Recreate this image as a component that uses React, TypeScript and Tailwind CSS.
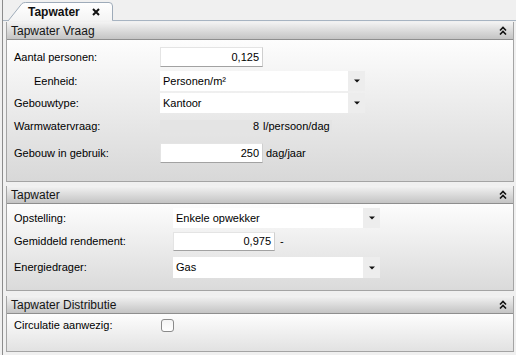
import type { ReactNode } from 'react';

function Chevrons() {
  return (
    <svg width="8" height="9" viewBox="0 0 8 9" className="mr-[6px]">
      <path d="M1 4.5 L4 1.5 L7 4.5" fill="none" stroke="#111" strokeWidth="1.6" />
      <path d="M1 8.5 L4 5.5 L7 8.5" fill="none" stroke="#111" strokeWidth="1.6" />
    </svg>
  );
}

function Caret() {
  return (
    <svg width="6" height="4" viewBox="0 0 6 4">
      <path d="M0 0.5 H6 L3 3.5 Z" fill="#111" />
    </svg>
  );
}

function SectionHeader({ title }: { title: string }) {
  return (
    <div className="h-[18px] flex items-center justify-between pl-[4px] border-b border-[#8e8e8e] bg-linear-to-b from-[#f3f3f3] to-[#c4c4c4] text-[12px] text-[#151515]">
      <span>{title}</span>
      <Chevrons />
    </div>
  );
}

function Section({ title, bodyClass, children }: { title: string; bodyClass: string; children: ReactNode }) {
  return (
    <div className="border-x border-b border-[#a4a4a4]">
      <SectionHeader title={title} />
      <div className={`pl-[7px] flex flex-col bg-linear-to-b from-[#fdfdfd] ${bodyClass}`}>{children}</div>
    </div>
  );
}

function Row({ label, labelW, className = '', indent = false, children }: {
  label: string; labelW: string; className?: string; indent?: boolean; children: ReactNode;
}) {
  return (
    <div className={`flex items-center ${className}`}>
      <div className={`${labelW} shrink-0 ${indent ? 'pl-[20px]' : ''}`}>{label}</div>
      {children}
    </div>
  );
}

function NumberBox({ value, w }: { value: string; w: string }) {
  return (
    <div className={`${w} h-full flex items-center justify-end pr-[3px] bg-white border border-t-[#e4e4e4] border-l-[#e4e4e4] border-r-[#cfcfcf] border-b-[#a2a2a2]`}>
      {value}
    </div>
  );
}

function Dropdown({ value, w }: { value: string; w: string }) {
  return (
    <div className={`${w} h-full flex items-stretch bg-white`}>
      <div className="flex-1 flex items-center pl-[3px]">{value}</div>
      <div className="w-[17px] flex items-center justify-center bg-[#ededed]">
        <Caret />
      </div>
    </div>
  );
}

export default function App() {
  return (
    <div className="w-[516px] h-[355px] bg-[#f0f0f0] font-['Liberation_Sans',Arial,sans-serif] text-[11px] text-black overflow-hidden">
      <div className="ml-[2px] h-full border-l border-[#8c8c8c]">
        {/* tab strip */}
        <div className="h-[21px] flex">
          <div className="w-[5px] border-b border-[#a7b4c2]" />
          <div className="relative w-[105px] h-[21px]">
            <svg className="absolute inset-0" width="105" height="21" viewBox="0 0 105 21">
              <defs>
                <linearGradient id="tabg" x1="0" y1="0" x2="0" y2="1">
                  <stop offset="0" stopColor="#ffffff" />
                  <stop offset="1" stopColor="#f4f4f4" />
                </linearGradient>
              </defs>
              <path
                d="M0 21 L14 3.5 Q15.5 2.5 17.5 2.5 L101 2.5 Q104.5 2.5 104.5 6 L104.5 20.5 L105 20.5"
                fill="url(#tabg)"
                stroke="#9eabb9"
              />
            </svg>
            <div className="relative h-full flex items-center pt-[2px] pl-[20px] gap-[12px] font-bold text-[12px] text-[#111]">
              <span>Tapwater</span>
              <svg width="8" height="8" viewBox="0 0 8 8">
                <path d="M1 1 L7 7 M7 1 L1 7" stroke="#111" strokeWidth="2" />
              </svg>
            </div>
          </div>
          <div className="flex-1 border-b border-[#a7b4c2]" />
        </div>

        <div className="pl-[3px] pr-[2px] pt-[1px] flex flex-col">
          <Section title="Tapwater Vraag" bodyClass="h-[141px] pt-[7px] to-[#d8d8d8]">
            <Row label="Aantal personen:" labelW="w-[146px]" className="h-[20px]">
              <NumberBox value="0,125" w="w-[103px]" />
            </Row>
            <Row label="Eenheid:" labelW="w-[146px]" indent className="h-[20px] mt-[4px]">
              <Dropdown value="Personen/m²" w="w-[205px]" />
            </Row>
            <Row label="Gebouwtype:" labelW="w-[146px]" className="h-[20px] mt-[2px]">
              <Dropdown value="Kantoor" w="w-[205px]" />
            </Row>
            <Row label="Warmwatervraag:" labelW="w-[146px]" className="h-[13px] mt-[7px]">
              <div className="h-full flex items-center bg-[#e4e4e4]">
                <div className="w-[103px] text-right pr-[4px]">8</div>
                <div className="pl-[0px] pr-[2px]">l/persoon/dag</div>
              </div>
            </Row>
            <Row label="Gebouw in gebruik:" labelW="w-[146px]" className="h-[20px] mt-[10px]">
              <NumberBox value="250" w="w-[103px]" />
              <span className="pl-[3px]">dag/jaar</span>
            </Row>
          </Section>

          <div className="mt-[4px]">
            <Section title="Tapwater" bodyClass="h-[86px] pt-[4px] to-[#dadada]">
              <Row label="Opstelling:" labelW="w-[159px]" className="h-[20px]">
                <Dropdown value="Enkele opwekker" w="w-[207px]" />
              </Row>
              <Row label="Gemiddeld rendement:" labelW="w-[159px]" className="h-[19px] mt-[4px]">
                <NumberBox value="0,975" w="w-[102px]" />
                <span className="pl-[5px]">-</span>
              </Row>
              <Row label="Energiedrager:" labelW="w-[159px]" className="h-[21px] mt-[6px]">
                <Dropdown value="Gas" w="w-[207px]" />
              </Row>
            </Section>
          </div>

          <div className="mt-[5px]">
            <Section title="Tapwater Distributie" bodyClass="h-[37px] pt-[5px] to-[#e2e2e2]">
              <Row label="Circulatie aanwezig:" labelW="w-[147px]" className="h-[13px]">
                <div className="w-[13px] h-[13px] rounded-[3px] border border-[#8a8a8a] bg-linear-to-b from-[#f4f4f4] to-[#ffffff]" />
              </Row>
            </Section>
          </div>
        </div>
      </div>
    </div>
  );
}
